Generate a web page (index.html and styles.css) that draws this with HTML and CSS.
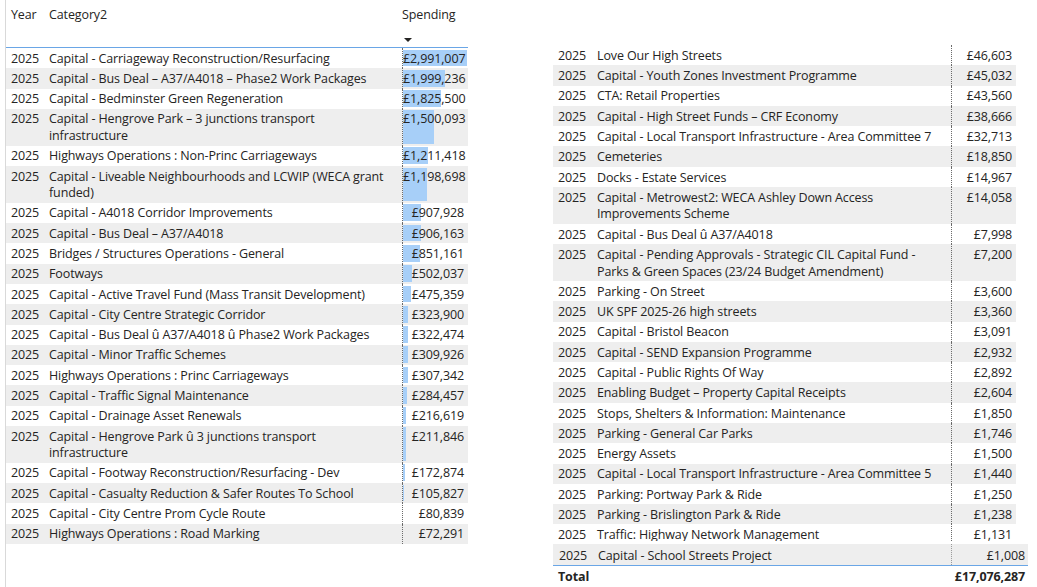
FILE: index.html
```html
<!DOCTYPE html>
<html lang="en">
<head>
<meta charset="utf-8">
<title>Spending</title>
<link rel="stylesheet" href="styles.css">
</head>
<body>
<div class="page">
  <section class="left">
    <div class="head">
      <div class="yr">Year</div>
      <div class="cat">Category2</div>
      <div class="hamt"><span>Spending</span><i class="sort"></i></div>
    </div>
    <div class="rows">
      <div class="row"><div class="yr">2025</div><div class="cat">Capital - Carriageway Reconstruction/Resurfacing</div><div class="amt"><b class="bar" style="width:64px"></b><span>£2,991,007</span></div></div>
      <div class="row"><div class="yr">2025</div><div class="cat">Capital - Bus Deal – A37/A4018 – Phase2 Work Packages</div><div class="amt"><b class="bar" style="width:42.1px"></b><span>£1,999,236</span></div></div>
      <div class="row"><div class="yr">2025</div><div class="cat">Capital - Bedminster Green Regeneration</div><div class="amt"><b class="bar" style="width:38.2px"></b><span>£1,825,500</span></div></div>
      <div class="row"><div class="yr">2025</div><div class="cat">Capital - Hengrove Park – 3 junctions transport infrastructure</div><div class="amt"><b class="bar" style="width:31.1px"></b><span>£1,500,093</span></div></div>
      <div class="row"><div class="yr">2025</div><div class="cat">Highways Operations : Non-Princ Carriageways</div><div class="amt"><b class="bar" style="width:24.7px"></b><span>£1,211,418</span></div></div>
      <div class="row"><div class="yr">2025</div><div class="cat">Capital - Liveable Neighbourhoods and LCWIP (WECA grant funded)</div><div class="amt"><b class="bar" style="width:24.4px"></b><span>£1,198,698</span></div></div>
      <div class="row"><div class="yr">2025</div><div class="cat">Capital - A4018 Corridor Improvements</div><div class="amt"><b class="bar" style="width:18px"></b><span>£907,928</span></div></div>
      <div class="row"><div class="yr">2025</div><div class="cat">Capital - Bus Deal – A37/A4018</div><div class="amt"><b class="bar" style="width:17.9px"></b><span>£906,163</span></div></div>
      <div class="row"><div class="yr">2025</div><div class="cat">Bridges / Structures Operations - General</div><div class="amt"><b class="bar" style="width:16.7px"></b><span>£851,161</span></div></div>
      <div class="row"><div class="yr">2025</div><div class="cat">Footways</div><div class="amt"><b class="bar" style="width:9px"></b><span>£502,037</span></div></div>
      <div class="row"><div class="yr">2025</div><div class="cat">Capital - Active Travel Fund (Mass Transit Development)</div><div class="amt"><b class="bar" style="width:8.4px"></b><span>£475,359</span></div></div>
      <div class="row"><div class="yr">2025</div><div class="cat">Capital - City Centre Strategic Corridor</div><div class="amt"><b class="bar" style="width:5.1px"></b><span>£323,900</span></div></div>
      <div class="row"><div class="yr">2025</div><div class="cat">Capital - Bus Deal û A37/A4018 û Phase2 Work Packages</div><div class="amt"><b class="bar" style="width:5px"></b><span>£322,474</span></div></div>
      <div class="row"><div class="yr">2025</div><div class="cat">Capital - Minor Traffic Schemes</div><div class="amt"><b class="bar" style="width:4.8px"></b><span>£309,926</span></div></div>
      <div class="row"><div class="yr">2025</div><div class="cat">Highways Operations : Princ Carriageways</div><div class="amt"><b class="bar" style="width:4.7px"></b><span>£307,342</span></div></div>
      <div class="row"><div class="yr">2025</div><div class="cat">Capital - Traffic Signal Maintenance</div><div class="amt"><b class="bar" style="width:4.2px"></b><span>£284,457</span></div></div>
      <div class="row"><div class="yr">2025</div><div class="cat">Capital - Drainage Asset Renewals</div><div class="amt"><b class="bar" style="width:2.7px"></b><span>£216,619</span></div></div>
      <div class="row"><div class="yr">2025</div><div class="cat">Capital - Hengrove Park û 3 junctions transport infrastructure</div><div class="amt"><b class="bar" style="width:2.6px"></b><span>£211,846</span></div></div>
      <div class="row"><div class="yr">2025</div><div class="cat">Capital - Footway Reconstruction/Resurfacing - Dev</div><div class="amt"><b class="bar" style="width:1.7px"></b><span>£172,874</span></div></div>
      <div class="row"><div class="yr">2025</div><div class="cat">Capital - Casualty Reduction &amp; Safer Routes To School</div><div class="amt"><b class="bar" style="width:0.4px"></b><span>£105,827</span></div></div>
      <div class="row"><div class="yr">2025</div><div class="cat">Capital - City Centre Prom Cycle Route</div><div class="amt"><span>£80,839</span></div></div>
      <div class="row"><div class="yr">2025</div><div class="cat">Highways Operations : Road Marking</div><div class="amt"><span>£72,291</span></div></div>
    </div>
  </section>

  <section class="right">
    <div class="scroll">
      <div class="row"><div class="yr">2025</div><div class="cat">Love Our High Streets</div><div class="amt"><span>£46,603</span></div></div>
      <div class="row"><div class="yr">2025</div><div class="cat">Capital - Youth Zones Investment Programme</div><div class="amt"><span>£45,032</span></div></div>
      <div class="row"><div class="yr">2025</div><div class="cat">CTA: Retail Properties</div><div class="amt"><span>£43,560</span></div></div>
      <div class="row"><div class="yr">2025</div><div class="cat">Capital - High Street Funds – CRF Economy</div><div class="amt"><span>£38,666</span></div></div>
      <div class="row"><div class="yr">2025</div><div class="cat">Capital - Local Transport Infrastructure - Area Committee 7</div><div class="amt"><span>£32,713</span></div></div>
      <div class="row"><div class="yr">2025</div><div class="cat">Cemeteries</div><div class="amt"><span>£18,850</span></div></div>
      <div class="row"><div class="yr">2025</div><div class="cat">Docks - Estate Services</div><div class="amt"><span>£14,967</span></div></div>
      <div class="row"><div class="yr">2025</div><div class="cat">Capital - Metrowest2: WECA Ashley Down Access Improvements Scheme</div><div class="amt"><span>£14,058</span></div></div>
      <div class="row"><div class="yr">2025</div><div class="cat">Capital - Bus Deal û A37/A4018</div><div class="amt"><span>£7,998</span></div></div>
      <div class="row"><div class="yr">2025</div><div class="cat">Capital - Pending Approvals - Strategic CIL Capital Fund - Parks &amp; Green Spaces (23/24 Budget Amendment)</div><div class="amt"><span>£7,200</span></div></div>
      <div class="row"><div class="yr">2025</div><div class="cat">Parking - On Street</div><div class="amt"><span>£3,600</span></div></div>
      <div class="row"><div class="yr">2025</div><div class="cat">UK SPF 2025-26 high streets</div><div class="amt"><span>£3,360</span></div></div>
      <div class="row"><div class="yr">2025</div><div class="cat">Capital - Bristol Beacon</div><div class="amt"><span>£3,091</span></div></div>
      <div class="row"><div class="yr">2025</div><div class="cat">Capital - SEND Expansion Programme</div><div class="amt"><span>£2,932</span></div></div>
      <div class="row"><div class="yr">2025</div><div class="cat">Capital - Public Rights Of Way</div><div class="amt"><span>£2,892</span></div></div>
      <div class="row"><div class="yr">2025</div><div class="cat">Enabling Budget – Property Capital Receipts</div><div class="amt"><span>£2,604</span></div></div>
      <div class="row"><div class="yr">2025</div><div class="cat">Stops, Shelters &amp; Information: Maintenance</div><div class="amt"><span>£1,850</span></div></div>
      <div class="row"><div class="yr">2025</div><div class="cat">Parking - General Car Parks</div><div class="amt"><span>£1,746</span></div></div>
      <div class="row"><div class="yr">2025</div><div class="cat">Energy Assets</div><div class="amt"><span>£1,500</span></div></div>
      <div class="row"><div class="yr">2025</div><div class="cat">Capital - Local Transport Infrastructure - Area Committee 5</div><div class="amt"><span>£1,440</span></div></div>
      <div class="row"><div class="yr">2025</div><div class="cat">Parking: Portway Park &amp; Ride</div><div class="amt"><span>£1,250</span></div></div>
      <div class="row"><div class="yr">2025</div><div class="cat">Parking - Brislington Park &amp; Ride</div><div class="amt"><span>£1,238</span></div></div>
      <div class="row"><div class="yr">2025</div><div class="cat">Traffic: Highway Network Management</div><div class="amt"><span>£1,131</span></div></div>
    </div>
    <div class="row last"><div class="yr">2025</div><div class="cat">Capital - School Streets Project</div><div class="amt"><span>£1,008</span></div></div>
    <div class="total"><span>Total</span><span>£17,076,287</span></div>
  </section>
</div>
</body>
</html>
```

FILE: styles.css
```css
html, body {
  margin: 0;
  padding: 0;
  background: #ffffff;
}

body {
  font-family: "Open Sans", "Noto Sans", sans-serif;
  font-size: 12.5px;
  letter-spacing: -0.12px;
  color: #252423;
}

.page {
  display: flex;
  height: 587px;
  overflow: hidden;
}

/* ---------- left table ---------- */
.left {
  margin-left: 5px;
  width: 462px;
  border-left: 1px solid #d9d9d9;
  display: flex;
  flex-direction: column;
}

.head {
  height: 47px;
  border-bottom: 1px solid #6aa6e6;
  display: grid;
  grid-template-columns: 39px 357px 1fr;
  line-height: 17px;
}

.head > div {
  padding-top: 6px;
}

.head .hamt {
  display: flex;
  flex-direction: column;
  align-items: flex-start;
  padding-left: 0;
}

.sort {
  display: block;
  width: 0;
  height: 0;
  margin-top: 15px;
  margin-left: 2px;
  border-left: 4px solid transparent;
  border-right: 4px solid transparent;
  border-top: 4.5px solid #252423;
}

.row {
  display: grid;
  grid-template-columns: 39px 357px 1fr;
  line-height: 16.6px;
}

.row > div {
  padding-top: 2.6px;
  padding-bottom: 1.1px;
}

.rows .row:nth-child(even),
.scroll .row:nth-child(even) {
  background: #eeeeee;
}

.yr {
  padding-left: 5px;
}

.cat {
  padding-left: 4px;
  padding-right: 12px;
}

.amt {
  position: relative;
  border-left: 1px dotted #6b6b6b;
  text-align: right;
  padding-right: 4px;
  white-space: nowrap;
}

.amt span {
  position: relative;
}

.bar {
  position: absolute;
  left: 0;
  top: 1.5px;
  bottom: 2px;
  background: #a7cff8;
}

/* ---------- right table ---------- */
.right {
  margin-left: 85px;
  width: 475px;
  display: flex;
  flex-direction: column;
  padding-top: 45px;
}

.scroll {
  width: 463px;
  height: 496px;
  overflow: hidden;
  flex: none;
}

.scroll .row {
  grid-template-columns: 40px 358px 1fr;
}

.scroll .row > div {
  padding-top: 2.9px;
  padding-bottom: 0.8px;
}

.row.last {
  margin-top: 3px;
  grid-template-columns: 41px 357px 1fr;
  background: #eeeeee;
  border-bottom: 1px solid #6aa6e6;
}

.row.last > div {
  padding-top: 3.8px;
  padding-bottom: 0.6px;
}

.row.last .yr {
  padding-left: 6px;
}

.row.last .amt {
  border-left-color: #9a9a9a;
  padding-right: 3px;
}

.total {
  display: flex;
  justify-content: space-between;
  height: 21px;
  line-height: 21px;
  font-weight: 700;
  padding-left: 5px;
  padding-right: 3px;
}
```
